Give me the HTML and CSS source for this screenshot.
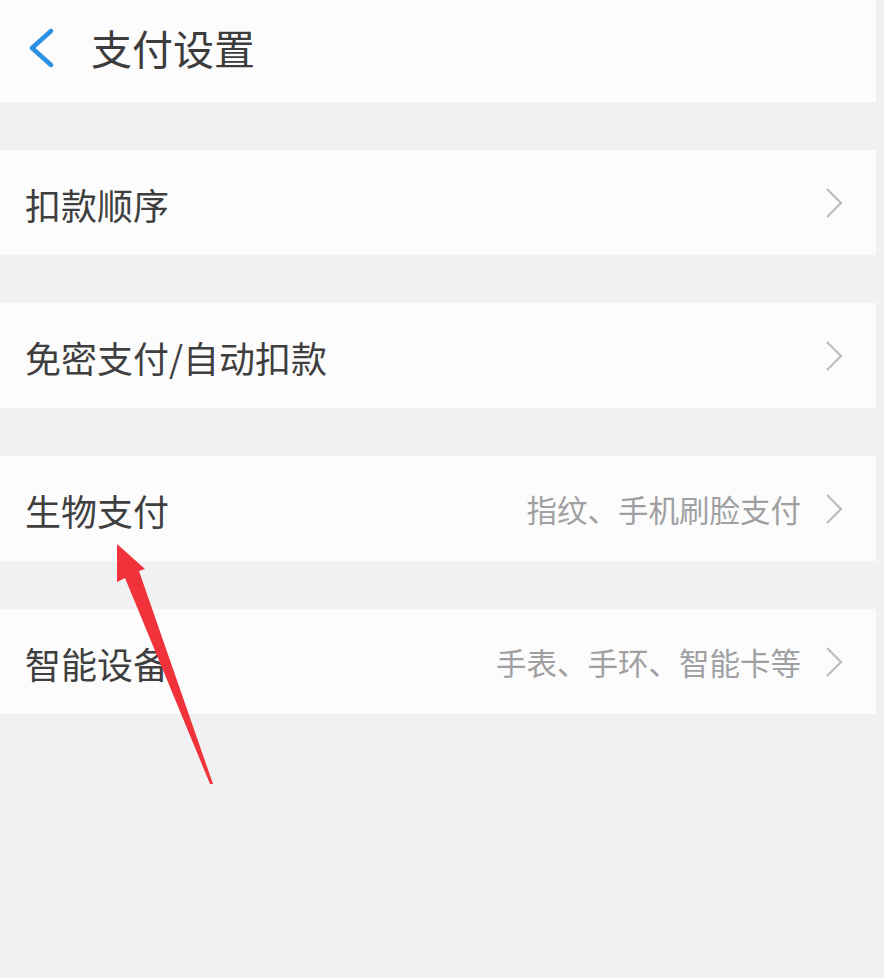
FILE: index.html
```html
<!DOCTYPE html>
<html lang="zh-CN">
<head>
  <meta charset="UTF-8">
  <meta name="viewport" content="width=device-width, initial-scale=1.0">
  <title>支付设置</title>
  <link rel="stylesheet" href="styles.css">
</head>
<body>

<div class="page">
  <header class="topbar">
    <svg class="back" width="26" height="40" viewBox="0 0 26 40">
      <polyline points="23,3 4,20 23,37" fill="none" stroke="#2b8fe3" stroke-width="4.5" stroke-linecap="round" stroke-linejoin="round"/>
    </svg>
    <h1 class="title">支付设置</h1>
  </header>

  <div class="row">
    <span class="label">扣款顺序</span>
    <span class="right">
      <svg class="chev" width="18" height="32" viewBox="0 0 18 32"><polyline points="2,2 16,16 2,30" fill="none" stroke="#bdbdbf" stroke-width="2.2"/></svg>
    </span>
  </div>

  <div class="row">
    <span class="label">免密支付/自动扣款</span>
    <span class="right">
      <svg class="chev" width="18" height="32" viewBox="0 0 18 32"><polyline points="2,2 16,16 2,30" fill="none" stroke="#bdbdbf" stroke-width="2.2"/></svg>
    </span>
  </div>

  <div class="row">
    <span class="label">生物支付</span>
    <span class="right">
      <span class="hint">指纹、手机刷脸支付</span>
      <svg class="chev" width="18" height="32" viewBox="0 0 18 32"><polyline points="2,2 16,16 2,30" fill="none" stroke="#bdbdbf" stroke-width="2.2"/></svg>
    </span>
  </div>

  <div class="row">
    <span class="label">智能设备</span>
    <span class="right">
      <span class="hint">手表、手环、智能卡等</span>
      <svg class="chev" width="18" height="32" viewBox="0 0 18 32"><polyline points="2,2 16,16 2,30" fill="none" stroke="#bdbdbf" stroke-width="2.2"/></svg>
    </span>
  </div>
</div>

<svg class="arrow" width="884" height="978" viewBox="0 0 884 978">
  <polygon points="117,544 145,569 139,571 213,784 210,784 125,578 117,582" fill="#f0333a"/>
</svg>

</body>
</html>
```

FILE: styles.css
```css
body {
  margin: 0;
  background-color: #f1f1f3;
  font-family: "Noto Sans CJK SC", "Noto Sans", sans-serif;
  height: 978px;
  overflow: hidden;
  position: relative;
}

.page {
  width: 876px;
}

.topbar {
  height: 102px;
  background-color: #fcfcfd;
  display: flex;
  align-items: center;
  padding-left: 28px;
  margin-bottom: 48px;
}

.back {
  margin-top: -6px;
}

.title {
  margin: -8px 0 0 37px;
  font-size: 41px;
  font-weight: normal;
  color: #3c3c3c;
  line-height: 1;
}

.row {
  height: 105px;
  background-color: #fcfcfd;
  display: flex;
  align-items: center;
  justify-content: space-between;
  padding: 0 33px 0 25px;
  margin-bottom: 48px;
}

.label {
  font-size: 36px;
  font-weight: normal;
  color: #3f3f3f;
  line-height: 1;
  margin-top: 2px;
}

.right {
  display: flex;
  align-items: center;
  gap: 24px;
}

.hint {
  font-size: 30.5px;
  color: #a0a0a2;
  line-height: 1;
  margin-top: 2px;
}

.arrow {
  position: absolute;
  left: 0;
  top: 0;
  pointer-events: none;
}
```
